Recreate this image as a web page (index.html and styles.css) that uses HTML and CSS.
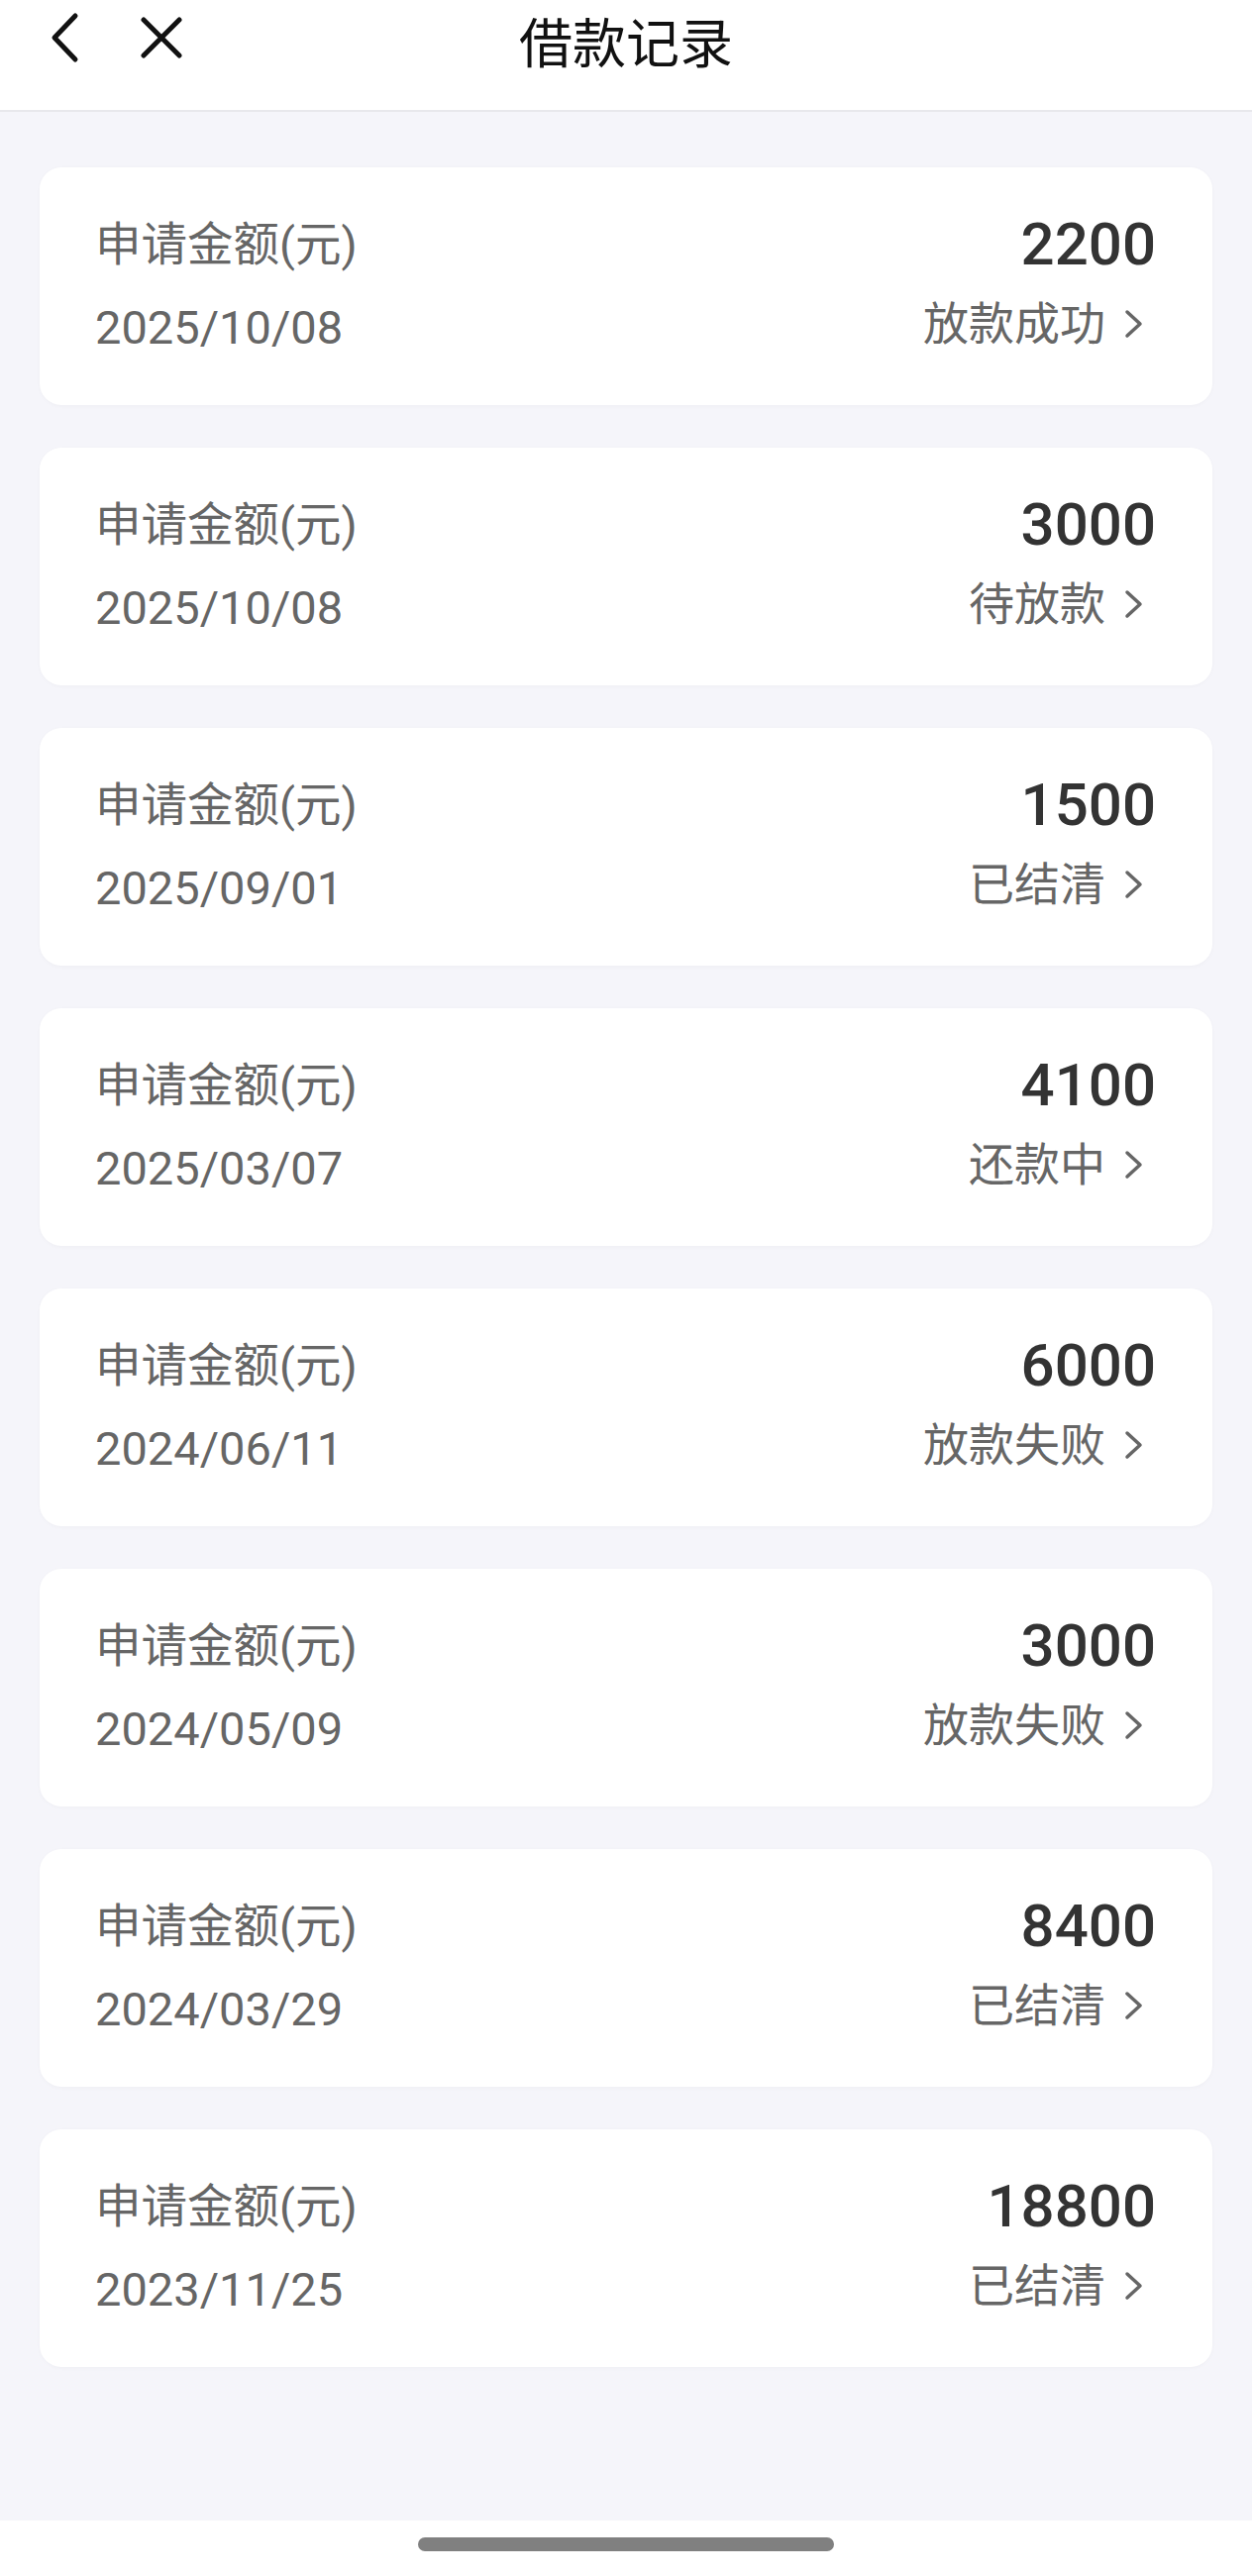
FILE: index.html
```html
<!DOCTYPE html>
<html lang="zh-CN">
<head>
<meta charset="utf-8">
<title>借款记录</title>
<link rel="stylesheet" href="styles.css">
</head>
<body>
<div class="page">
  <header class="topbar">
    <div class="nav-icons">
      <svg class="icon-back" width="34" height="52" viewBox="0 0 34 52"><path d="M28 4 L7 26 L28 48" fill="none" stroke="#111" stroke-width="5" stroke-linecap="round" stroke-linejoin="round"/></svg>
      <svg class="icon-close" width="44" height="42" viewBox="0 0 44 42"><path d="M4 3 L40 39 M40 3 L4 39" fill="none" stroke="#111" stroke-width="5" stroke-linecap="round"/></svg>
    </div>
    <h1 class="title">借款记录</h1>
  </header>

  <main class="list">
    <div class="card">
      <div class="row"><span class="label">申请金额(元)</span><span class="amount">2200</span></div>
      <div class="row"><span class="date">2025/10/08</span><span class="status">放款成功<svg class="chev" width="22" height="30" viewBox="0 0 22 30"><path d="M5 3 L18 15 L5 27" fill="none" stroke="#666" stroke-width="3.5" stroke-linecap="round" stroke-linejoin="round"/></svg></span></div>
    </div>
    <div class="card">
      <div class="row"><span class="label">申请金额(元)</span><span class="amount">3000</span></div>
      <div class="row"><span class="date">2025/10/08</span><span class="status">待放款<svg class="chev" width="22" height="30" viewBox="0 0 22 30"><path d="M5 3 L18 15 L5 27" fill="none" stroke="#666" stroke-width="3.5" stroke-linecap="round" stroke-linejoin="round"/></svg></span></div>
    </div>
    <div class="card">
      <div class="row"><span class="label">申请金额(元)</span><span class="amount">1500</span></div>
      <div class="row"><span class="date">2025/09/01</span><span class="status">已结清<svg class="chev" width="22" height="30" viewBox="0 0 22 30"><path d="M5 3 L18 15 L5 27" fill="none" stroke="#666" stroke-width="3.5" stroke-linecap="round" stroke-linejoin="round"/></svg></span></div>
    </div>
    <div class="card">
      <div class="row"><span class="label">申请金额(元)</span><span class="amount">4100</span></div>
      <div class="row"><span class="date">2025/03/07</span><span class="status">还款中<svg class="chev" width="22" height="30" viewBox="0 0 22 30"><path d="M5 3 L18 15 L5 27" fill="none" stroke="#666" stroke-width="3.5" stroke-linecap="round" stroke-linejoin="round"/></svg></span></div>
    </div>
    <div class="card">
      <div class="row"><span class="label">申请金额(元)</span><span class="amount">6000</span></div>
      <div class="row"><span class="date">2024/06/11</span><span class="status">放款失败<svg class="chev" width="22" height="30" viewBox="0 0 22 30"><path d="M5 3 L18 15 L5 27" fill="none" stroke="#666" stroke-width="3.5" stroke-linecap="round" stroke-linejoin="round"/></svg></span></div>
    </div>
    <div class="card">
      <div class="row"><span class="label">申请金额(元)</span><span class="amount">3000</span></div>
      <div class="row"><span class="date">2024/05/09</span><span class="status">放款失败<svg class="chev" width="22" height="30" viewBox="0 0 22 30"><path d="M5 3 L18 15 L5 27" fill="none" stroke="#666" stroke-width="3.5" stroke-linecap="round" stroke-linejoin="round"/></svg></span></div>
    </div>
    <div class="card">
      <div class="row"><span class="label">申请金额(元)</span><span class="amount">8400</span></div>
      <div class="row"><span class="date">2024/03/29</span><span class="status">已结清<svg class="chev" width="22" height="30" viewBox="0 0 22 30"><path d="M5 3 L18 15 L5 27" fill="none" stroke="#666" stroke-width="3.5" stroke-linecap="round" stroke-linejoin="round"/></svg></span></div>
    </div>
    <div class="card">
      <div class="row"><span class="label">申请金额(元)</span><span class="amount">18800</span></div>
      <div class="row"><span class="date">2023/11/25</span><span class="status">已结清<svg class="chev" width="22" height="30" viewBox="0 0 22 30"><path d="M5 3 L18 15 L5 27" fill="none" stroke="#666" stroke-width="3.5" stroke-linecap="round" stroke-linejoin="round"/></svg></span></div>
    </div>
  </main>

  <footer class="homebar"><div class="pill"></div></footer>
</div>
</body>
</html>
```

FILE: styles.css
```css
* { box-sizing: border-box; }
html, body { margin: 0; padding: 0; }
body {
  font-family: Roboto, "Noto Sans CJK SC", sans-serif;
  background: #f5f5fa;
}
.page {
  width: 1264px;
  min-height: 2601px;
  display: flex;
  flex-direction: column;
}
.topbar {
  position: relative;
  height: 113px;
  background: #fff;
  border-bottom: 2px solid #e8e8ec;
  display: flex;
  align-items: center;
  justify-content: center;
}
.nav-icons {
  position: absolute;
  left: 48px;
  top: 12px;
  display: flex;
  align-items: center;
  gap: 59px;
}
.icon-back { display: block; }
.icon-close { display: block; }
.title {
  margin: 0 0 30px 0;
  font-family: "Noto Sans CJK SC", sans-serif;
  font-weight: 400;
  font-size: 54px;
  line-height: 60px;
  color: #111;
}
.list {
  flex: 1;
  padding: 56px 40px 0 40px;
  display: flex;
  flex-direction: column;
  gap: 43px;
}
.card {
  background: #fff;
  border-radius: 22px;
  height: 240px;
  padding: 48px 57px 50px 56px;
  display: flex;
  flex-direction: column;
  gap: 22px;
  box-shadow: 0 1px 4px rgba(0, 0, 0, 0.03);
}
.row {
  display: flex;
  justify-content: space-between;
  align-items: center;
  height: 60px;
}
.label {
  font-size: 46.5px;
  line-height: 60px;
  color: #666;
}
.amount {
  font-size: 60px;
  line-height: 60px;
  font-weight: 500;
  color: #333;
}
.date {
  font-size: 47px;
  line-height: 60px;
  color: #666;
  margin-top: 4px;
}
.status {
  font-size: 46px;
  line-height: 60px;
  color: #666;
  display: flex;
  align-items: center;
  gap: 17px;
  margin-right: 12px;
  margin-top: -4px;
}
.chev { display: block; }
.homebar {
  height: 56px;
  background: #fff;
  display: flex;
  justify-content: center;
  padding-top: 17px;
}
.pill {
  width: 420px;
  height: 14px;
  border-radius: 7px;
  background: #808080;
}
```
